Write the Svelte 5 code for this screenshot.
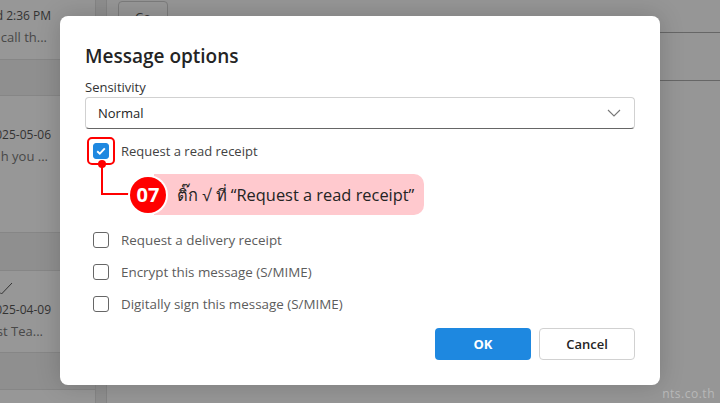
<script>
  const others = ['Request a delivery receipt', 'Encrypt this message (S/MIME)', 'Digitally sign this message (S/MIME)'];
</script>

<div class="page">
  <aside class="list">
    <div class="item first">
      <span class="date">d 2:36 PM</span>
      <span class="snippet s1">call th...</span>
    </div>
    <div class="band b1"></div>
    <div class="item second">
      <span class="date">025-05-06</span>
      <span class="snippet s2">h you ...</span>
    </div>
    <div class="band b2"></div>
    <div class="item third">
      <svg class="tick" width="14" height="14" viewBox="0 0 14 14"><path d="M0 8.5 L1.5 10 L12 -1" fill="none" stroke="#333" stroke-width="1"/></svg>
      <span class="date">025-04-09</span>
      <span class="snippet s3">st Tea...</span>
    </div>
    <div class="band b3"></div>
    <div class="rest"></div>
  </aside>
  <div class="gutter"></div>
  <main class="pane">
    <div class="toolbar"><button class="bgbtn">Co</button></div>
    <div class="paneRow"></div>
  </main>

  <section class="dialog">
    <h1>Message options</h1>
    <div class="lbl">Sensitivity</div>
    <div class="select">
      <span>Normal</span>
      <svg width="14" height="8" viewBox="0 0 14 8"><path d="M1 1 L7 7 L13 1" fill="none" stroke="#777" stroke-width="1.1"/></svg>
    </div>

    <div class="row checkedRow">
      <span class="redbox"></span>
      <span class="box on">
        <svg width="10" height="8" viewBox="0 0 10 8"><path d="M1.2 4.2 L3.8 6.6 L8.8 1.4" fill="none" stroke="#fff" stroke-width="1.9"/></svg>
      </span>
      <span>Request a read receipt</span>
    </div>

    <div class="callout">
      <svg class="wire" width="34" height="42" viewBox="0 0 34 42">
        <circle cx="5" cy="5" r="4" fill="#f00"/>
        <path d="M5 5 V35 H34" fill="none" stroke="#f00" stroke-width="2"/>
      </svg>
      <span class="num">07</span>
      <span class="note">ติ๊ก √ ที่ “Request a read receipt”</span>
    </div>

    <div class="rows">
      {#each others as o}
        <div class="row"><span class="box"></span><span>{o}</span></div>
      {/each}
    </div>

    <div class="actions">
      <button class="ok">OK</button>
      <button class="cancel">Cancel</button>
    </div>
  </section>

  <span class="mark">nts.co.th</span>
</div>

<style>
  :global(body) { margin: 0; }
  .page {
    position: relative;
    width: 720px;
    height: 403px;
    overflow: hidden;
    display: flex;
    background: #949494;
    font-family: "Open Sans", "Noto Sans", sans-serif;
  }
  .list {
    width: 96px;
    box-sizing: border-box;
    flex: none;
    display: flex;
    flex-direction: column;
    background: #979797;
    border-right: 1px solid #858585;
  }
  .item {
    display: flex;
    flex-direction: column;
    align-items: flex-end;
    padding-right: 44px;
    box-sizing: border-box;
    border-bottom: 1px solid #868686;
    font-size: 12px;
    line-height: 20px;
    color: #333;
    white-space: nowrap;
    position: relative;
  }
  .snippet { color: #484848; margin-top: 0.5px; font-size: 13px; }
  .s1 { margin-right: 4px; }
  .s2 { margin-right: 3px; }
  .s3 { margin-right: 8px; }
  .first { height: 60px; padding-top: 6px; }
  .second { height: 137px; padding-top: 29px; }
  .third { height: 82px; padding-top: 29px; }
  .tick { position: absolute; left: 0; top: 13px; overflow: visible; }
  .band { border-bottom: 1px solid #868686; box-sizing: border-box; background: #8f8f8f; }
  .b1 { height: 36px; }
  .b2 { height: 38px; }
  .b3 { height: 37px; }
  .rest { flex: 1; }
  .gutter { width: 11px; box-sizing: border-box; flex: none; background: #8e8e8e; border-right: 1px solid #848484; }
  .pane { flex: 1; background: #969696; display: flex; flex-direction: column; }
  .toolbar {
    height: 32px;
    border-bottom: 1px solid #666;
    padding-left: 11px;
  }
  .bgbtn {
    width: 50px;
    height: 32px;
    margin-top: 1px;
    border: 1px solid #7c7c7c;
    border-radius: 4px;
    background: #979797;
    font: 13px "Open Sans", sans-serif;
    color: #333;
    padding: 0;
  }
  .paneRow { height: 47px; border-bottom: 1px solid #666; }

  .dialog {
    position: absolute;
    left: 60px;
    top: 16px;
    width: 600px;
    height: 369px;
    box-sizing: border-box;
    padding: 26px 25px 25px;
    background: #fff;
    border-radius: 8px;
    box-shadow: 0 0 24px rgba(0,0,0,.18);
    display: flex;
    flex-direction: column;
    color: #242424;
    font-size: 13px;
  }
  h1 {
    margin: 0;
    font-size: 19px;
    line-height: 28px;
    font-weight: 600;
  }
  .lbl { margin-top: 7px; line-height: 20px; color: #333; }
  .select {
    height: 32px;
    box-sizing: border-box;
    border: 1px solid #d1d1d1;
    border-bottom-color: #666;
    border-radius: 4px;
    display: flex;
    align-items: center;
    justify-content: space-between;
    padding: 0 13px 0 12px;
    flex: none;
  }
  .row {
    position: relative;
    display: flex;
    align-items: center;
    gap: 12px;
    padding-left: 8px;
    height: 32px;
    color: #5c5c5c;
    flex: none;
    font-size: 13.4px;
  }
  .checkedRow { margin-top: 6px; color: #424242; font-size: 13px; }
  .box {
    width: 16px;
    height: 16px;
    box-sizing: border-box;
    border: 1px solid #666;
    border-radius: 3px;
    display: flex;
    align-items: center;
    justify-content: center;
    flex: none;
  }
  .box.on { background: #1e88e0; border-color: #1e88e0; }
  .redbox {
    position: absolute;
    left: 2px;
    top: 2px;
    width: 28px;
    height: 28px;
    box-sizing: border-box;
    border: 2px solid #f00;
    border-radius: 5px;
  }
  .callout {
    position: relative;
    display: flex;
    align-items: center;
    height: 41px;
    margin: 7px 0 0 45px;
    flex: none;
  }
  .wire { position: absolute; left: -33px; top: -15px; }
  .num {
    position: relative;
    width: 36px;
    height: 36px;
    border-radius: 50%;
    background: #f00;
    color: #fff;
    font: 700 20px/36px "Open Sans", sans-serif;
    text-align: center;
    box-shadow: 0 0 0 2px #fff;
    flex: none;
    z-index: 1;
  }
  .note {
    margin-left: -12px;
    height: 41px;
    line-height: 41px;
    padding: 0 10px 0 23px;
    background: #ffc9ce;
    border-radius: 0 10px 10px 0;
    font-size: 16.4px;
    color: #242424;
    white-space: nowrap;
  }
  .rows { margin-top: 9px; display: flex; flex-direction: column; }
  .actions {
    margin-top: auto;
    display: flex;
    justify-content: flex-end;
    gap: 8px;
  }
  button { font-family: inherit; }
  .ok, .cancel {
    width: 96px;
    height: 32px;
    border-radius: 4px;
    font-size: 13px;
    padding: 0;
    box-sizing: border-box;
  }
  .ok { background: #1e88e0; border: 0; color: #fff; font-weight: 700; }
  .cancel { background: #fff; border: 1px solid #d1d1d1; color: #242424; font-weight: 600; }
  .mark {
    position: absolute;
    right: 5px;
    bottom: 1px;
    color: #b8b8b8;
    font-size: 12px;
    letter-spacing: .5px;
  }
</style>
